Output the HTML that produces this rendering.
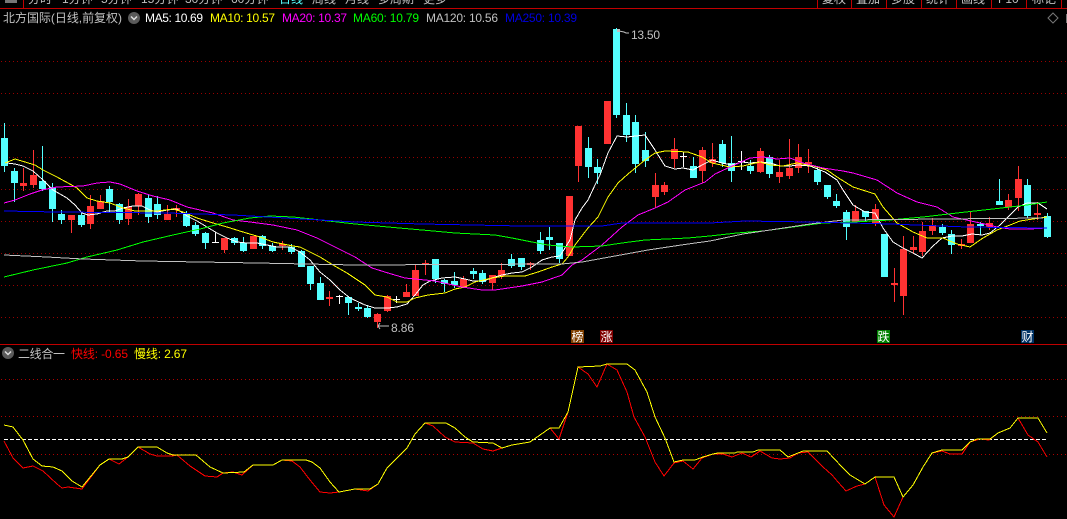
<!DOCTYPE html>
<html lang="zh"><head><meta charset="utf-8"><title>北方国际</title>
<style>
html,body{margin:0;padding:0;background:#000;width:1067px;height:519px;overflow:hidden}
svg{display:block;position:absolute;left:0;top:0}
text{font-family:"Liberation Sans","WenQuanYi Zen Hei","Noto Sans CJK SC",sans-serif;font-size:12px}
.l{fill:none;stroke-width:1;shape-rendering:crispEdges}
</style></head><body>
<svg width="1067" height="519" viewBox="0 0 1067 519" xmlns="http://www.w3.org/2000/svg">
<rect width="1067" height="519" fill="#000"/>
<!-- top tabs -->
<g fill="#c0c0c0">
<text x="28" y="3">分时</text><text x="62" y="3">1分钟</text><text x="101" y="3">5分钟</text><text x="141" y="3">15分钟</text><text x="185" y="3">30分钟</text><text x="231" y="3">60分钟</text>
<text x="279" y="3" fill="#54ffff">日线</text><text x="312" y="3">周线</text><text x="345" y="3">月线</text><text x="378" y="3">多周期</text><text x="423" y="3">更多</text>
<text x="822" y="3">复权</text><text x="856" y="3">叠加</text><text x="891" y="3">多股</text><text x="926" y="3">统计</text><text x="961" y="3">画线</text><text x="998" y="3">F10</text><text x="1032" y="3">标记</text>
</g>
<rect x="5" y="0" width="12" height="3" fill="#777"/>
<path d="M23.5 0V8M817.5 0V8M851.5 0V8M886.5 0V8M921.5 0V8M956.5 0V8M991.5 0V8M1026.5 0V8M1061.5 0V8" stroke="#c00000" shape-rendering="crispEdges"/>
<rect x="0" y="8" width="1067" height="1" fill="#c00000"/>
<!-- grid -->
<path d="M1 61.500H1067M1 93.500H1067M1 125.500H1067M1 157.500H1067M1 189.500H1067M1 221.500H1067M1 253.500H1067M1 285.500H1067M1 317.500H1067" stroke="#990000" stroke-dasharray="1 3" shape-rendering="crispEdges"/>
<path d="M1 379.500H1067M1 416.500H1067M1 454.500H1067" stroke="#b00000" stroke-dasharray="1 3" shape-rendering="crispEdges"/>
<!-- candle wicks -->
<g shape-rendering="crispEdges" fill="none">
<path stroke="#54ffff" d="M4.5 123V172M14.5 168V202M42.5 146V191M52.5 183V222M61.5 210V224M81.5 212V227M109.5 186V212M119.5 203V224M148.5 195V223M157.5 196V219M186.5 211V227M195.5 222V236M205.5 232V249M234.5 237V245M243.5 237V252M262.5 235V249M272.5 243V252M291.5 244V254M301.5 250V267M310.5 266V290M320.5 277V300M348.5 296V315M358.5 303V311M367.5 305V318M435.5 259V283M444.5 279V292M454.5 272V288M473.5 268V279M482.5 270V284M511.5 254V268M521.5 258V270M540.5 232V254M549.5 227V250M559.5 243V263M588.5 137V178M597.5 159V184M616.5 28V118M626.5 103V142M635.5 115V173M645.5 132V167M693.5 157V178M722.5 140V167M731.5 136V182M750.5 160V174M769.5 155V178M817.5 167V185M827.5 185V199M836.5 194V208M846.5 210V240M865.5 211V222M884.5 234V277M942.5 224V235M951.5 230V254M980.5 222V235M999.5 179V205M1027.5 179V218M1047.5 213V238"/>
<path stroke="#54ffff" stroke-width="7" d="M4.5 138V166M14.5 171V183M42.5 181V189M52.5 187V209M61.5 214V220M81.5 215V225M109.5 189V202M119.5 204V220M148.5 198V217M157.5 204V215M186.5 214V226M195.5 225V234M205.5 233V243M234.5 238V243M243.5 243V251M262.5 236V246M272.5 246V251M291.5 247V252M301.5 251V267M310.5 266V284M320.5 283V300M348.5 297V303M358.5 307V309M367.5 308V317M435.5 259V279M444.5 280V284M454.5 281V285M473.5 271V274M482.5 273V282M511.5 259V266M521.5 258V267M540.5 240V251M549.5 237V240M559.5 243V259M588.5 148V167M597.5 167V173M616.5 29V115M626.5 115V135M635.5 122V164M645.5 150V161M693.5 166V178M722.5 144V163M731.5 163V171M750.5 166V171M769.5 157V174M817.5 170V182M827.5 185V197M836.5 201V206M846.5 212V227M865.5 211V217M884.5 234V277M942.5 227V233M951.5 234V245M980.5 224V226M999.5 201V205M1027.5 185V216M1047.5 216V237"/>
<path stroke="#ff3232" d="M23.5 168V191M33.5 150V188M71.5 215V233M90.5 195V229M100.5 195V209M128.5 199V225M138.5 193V215M167.5 205V220M176.5 205V217M224.5 238V253M253.5 236V249M282.5 241V250M329.5 291V306M377.5 313V328M387.5 295V312M406.5 284V297M415.5 264V296M425.5 260V275M463.5 276V287M492.5 275V290M501.5 263V279M530.5 262V270M569.5 196V256M578.5 126V182M607.5 101V144M655.5 173V208M664.5 182V195M674.5 138V168M702.5 147V183M712.5 143V167M760.5 148V173M779.5 160V183M789.5 139V179M798.5 144V173M808.5 149V173M855.5 205V222M875.5 204V226M894.5 268V302M903.5 236V315M913.5 236V254M922.5 222V256M932.5 218V235M961.5 239V249M970.5 212V243M989.5 217V230M1008.5 194V210M1018.5 166V211M1037.5 202V220"/>
<path stroke="#ff3232" stroke-width="7" d="M23.5 183V186M33.5 175V185M71.5 215V220M90.5 206V224M100.5 201V209M128.5 207V219M138.5 194V206M167.5 214V220M176.5 208V210M224.5 238V250M253.5 236V249M282.5 244V246M329.5 297V299M377.5 314V322M387.5 296V311M406.5 292V297M415.5 270V296M425.5 263V265M463.5 279V287M492.5 275V283M501.5 270V276M530.5 263V265M569.5 196V256M578.5 126V166M607.5 101V144M655.5 185V197M664.5 185V192M674.5 149V159M702.5 150V171M712.5 159V163M760.5 151V172M779.5 172V177M789.5 168V176M798.5 157V168M808.5 162V164M855.5 211V222M875.5 209V223M894.5 283V285M903.5 249V296M913.5 247V250M922.5 231V252M932.5 225V231M961.5 244V246M970.5 224V243M989.5 223V227M1008.5 200V207M1018.5 179V198M1037.5 213V215"/>
<path stroke="#fff" d="M215.5 232V242M339.5 295V304M396.5 296V303M683.5 152V167M741.5 151V170M212 242.500H219M336 296.500H343M393 299.500H400M680 156.500H687M738 161.500H745"/>
</g>
<!-- MA lines -->
<polyline class="l" stroke="#fff" points="7,163 15,164 23,166 33,171 43,180 53,190 67,198 75,205 82,213 88,215 97,214 107,211 115,211 123,208 133,206 142,206 150,210 157,212 167,210 177,209 187,216 197,221 207,227 217,233 227,238 237,242 247,243 257,243 267,245 277,247 290,247 300,252 310,260 320,272 330,280 340,290 350,298 365,305 375,308 388,308 397,307 407,304 415,295 423,285 430,281 442,278 455,277 465,279 473,281 483,281 492,278 502,275 512,273 522,272 532,267 542,260 552,257 560,256 565,248 570,240 575,220 582,208 588,200 595,185 600,175 608,153 617,136 627,137 645,135 655,150 665,166 675,169 683,168 693,170 702,165 712,160 722,163 732,165 742,162 750,163 760,162 770,163 780,166 790,166 798,165 810,166 820,170 825,172 837,180 843,190 853,205 865,212 875,213 883,228 893,242 903,248 913,253 922,258 933,246 942,238 952,236 962,236 972,234 982,235 990,233 1000,225 1008,217 1018,207 1027,203 1038,203 1047,209"/>
<polyline class="l" stroke="#ff0" points="5,163 15,159 25,162 35,165 43,170 57,177 68,183 77,188 87,198 97,201 110,203 123,208 135,211 147,211 157,211 173,209 183,212 197,218 213,223 227,227 243,232 260,237 273,242 293,246 300,247 310,252 320,257 333,265 347,273 365,285 375,295 387,297 397,302 407,302 415,298 428,295 445,293 455,289 465,287 475,282 492,278 505,276 525,276 538,272 552,267 562,264 568,257 575,245 588,228 598,217 608,197 618,183 628,174 645,160 655,153 665,151 688,152 702,157 712,163 730,167 743,166 760,162 770,165 783,166 797,163 813,166 827,170 837,177 853,187 875,194 883,207 897,223 913,232 927,238 943,238 957,244 970,247 983,238 997,230 1010,225 1020,221 1033,219 1047,217"/>
<polyline class="l" stroke="#f0f" points="4,203 15,200 30,194 42,190 57,187 83,186 97,183 110,182 120,184 137,191 153,196 170,200 187,207 213,213 233,220 250,222 273,225 297,230 317,238 337,248 355,257 372,268 388,273 405,278 435,281 462,287 482,290 495,290 522,286 542,282 562,275 572,265 582,260 602,245 622,227 638,215 655,208 668,202 685,190 705,182 715,174 730,167 750,158 763,157 777,159 790,158 803,163 823,168 843,171 853,173 877,180 897,193 917,202 937,207 953,217 980,223 997,227 1010,229 1030,229 1047,228"/>
<polyline class="l" stroke="#0f0" points="4,277 33,270 67,263 87,257 117,250 143,242 173,235 200,229 223,223 250,218 270,216 293,217 320,220 355,224 388,227 422,230 455,233 495,235 512,238 532,242 548,245 572,247 602,246 622,243 645,240 688,238 710,236 737,233 763,231 793,227 823,223 853,222 890,220 923,217 957,213 993,209 1027,205 1047,202"/>
<polyline class="l" stroke="#c0c0c0" points="4,255 47,257 83,259 143,261 257,263 355,265 562,264 582,262 615,256 648,250 688,244 710,241 743,234 777,229 810,224 843,220 1043,218"/>
<polyline class="l" stroke="#00f" points="4,211 57,212 167,213 233,215 355,222 422,224 522,226 602,226 622,223 710,223 745,221 810,222 890,224 967,227 1047,228"/>
<!-- header text -->
<text x="3" y="22" fill="#c0c0c0" textLength="119">北方国际(日线,前复权)</text>
<circle cx="134" cy="18" r="6" fill="#5a5a5a"/><path d="M131 16.500l3 3 3-3" fill="none" stroke="#ddd" stroke-width="1.500"/>
<text x="145" y="22" fill="#fff" textLength="58">MA5: 10.69</text>
<text x="210" y="22" fill="#ff0" textLength="65">MA10: 10.57</text>
<text x="282" y="22" fill="#f0f" textLength="65">MA20: 10.37</text>
<text x="353" y="22" fill="#0f0" textLength="66">MA60: 10.79</text>
<text x="426" y="22" fill="#c0c0c0" textLength="72">MA120: 10.56</text>
<text x="505" y="22" fill="#0000e0" textLength="72">MA250: 10.39</text>
<path d="M1053 13l5 5-5 5-5-5z" fill="none" stroke="#777"/>
<rect x="1066" y="14" width="1" height="9" fill="#777"/>
<!-- hi / lo markers -->
<rect x="617" y="29" width="3" height="3" fill="#c0c0c0"/>
<path d="M619 31l5 1 2 1h3" fill="none" stroke="#c0c0c0"/>
<text x="631" y="39" fill="#c0c0c0" textLength="29">13.50</text>
<path d="M378 326H389M378 326l2-3M378 326l2 3" fill="none" stroke="#c0c0c0"/>
<text x="391" y="332" fill="#c0c0c0" textLength="23">8.86</text>
<!-- badges -->
<rect x="571" y="330" width="13" height="13" fill="#804000"/><text x="571.500" y="341" fill="#fff">榜</text>
<rect x="600" y="330" width="13" height="13" fill="#800000"/><text x="600.500" y="341" fill="#fff">涨</text>
<rect x="877" y="330" width="13" height="13" fill="#008000"/><text x="877.500" y="341" fill="#fff">跌</text>
<rect x="1021" y="330" width="13" height="13" fill="#003366"/><text x="1021.500" y="341" fill="#fff">财</text>
<!-- divider -->
<rect x="0" y="344" width="1067" height="1" fill="#c00000"/>
<!-- lower panel title -->
<circle cx="8" cy="353" r="6" fill="#5a5a5a"/><path d="M5 351.500l3 3 3-3" fill="none" stroke="#ddd" stroke-width="1.500"/>
<text x="18" y="358" fill="#c0c0c0" textLength="47">二线合一</text>
<text x="71" y="358" fill="#f00" textLength="57">快线: -0.65</text>
<text x="134" y="358" fill="#ff0" textLength="53">慢线: 2.67</text>
<!-- lower panel lines -->
<path d="M4 439.500H1046" stroke="#fff" stroke-dasharray="4 2" shape-rendering="crispEdges"/>
<polyline class="l" stroke="#f00" points="4,441 13,458 23,468 33,466 43,471 57,484 62,488 68,487 82,489 100,465 109,459 119,464 128,457 138,447 150,454 157,456 172,456 177,455 190,466 205,476 217,477 223,473 233,472 242,475 253,465 273,465 282,460 292,461 300,467 310,480 320,492 330,493 339,492 355,489 368,491 378,484 387,468 402,453 407,448 415,434 425,423 433,426 445,437 455,442 473,443 483,449 493,451 502,448 512,445 530,442 550,428 559,439 568,412 578,367 588,374 597,387 607,364 617,370 627,392 634,417 645,437 655,462 664,476 674,463 683,461 693,469 702,458 713,454 723,454 732,457 742,453 751,457 760,451 772,458 780,459 790,458 798,453 808,452 823,467 832,475 838,482 846,491 857,486 865,484 875,477 884,505 894,517 903,497 913,485 923,467 932,453 942,451 950,454 962,454 970,442 980,439 989,440 998,433 1010,428 1018,418 1028,435 1038,442 1047,457"/>
<polyline class="l" stroke="#ff0" points="4,425 13,427 23,440 33,459 42,466 53,467 62,471 72,481 82,487 100,465 109,459 122,459 128,457 138,447 157,447 167,453 173,455 196,455 210,467 223,473 244,472 253,465 273,465 282,460 306,460 312,462 320,468 330,482 339,492 355,489 370,489 378,484 387,468 402,453 407,448 415,434 425,423 446,423 455,428 465,437 473,442 493,443 502,448 512,445 530,442 550,428 559,428 568,412 578,367 600,366 607,364 627,364 635,370 647,392 655,417 665,438 674,462 683,460 695,460 703,457 713,454 718,453 735,453 737,452 753,452 758,450 780,450 788,457 798,453 803,451 827,451 842,467 850,475 865,484 875,477 894,477 903,497 913,485 923,467 932,453 942,450 962,450 970,442 977,439 990,439 998,433 1010,428 1018,418 1038,418 1047,433"/>
</svg>
</body></html>
